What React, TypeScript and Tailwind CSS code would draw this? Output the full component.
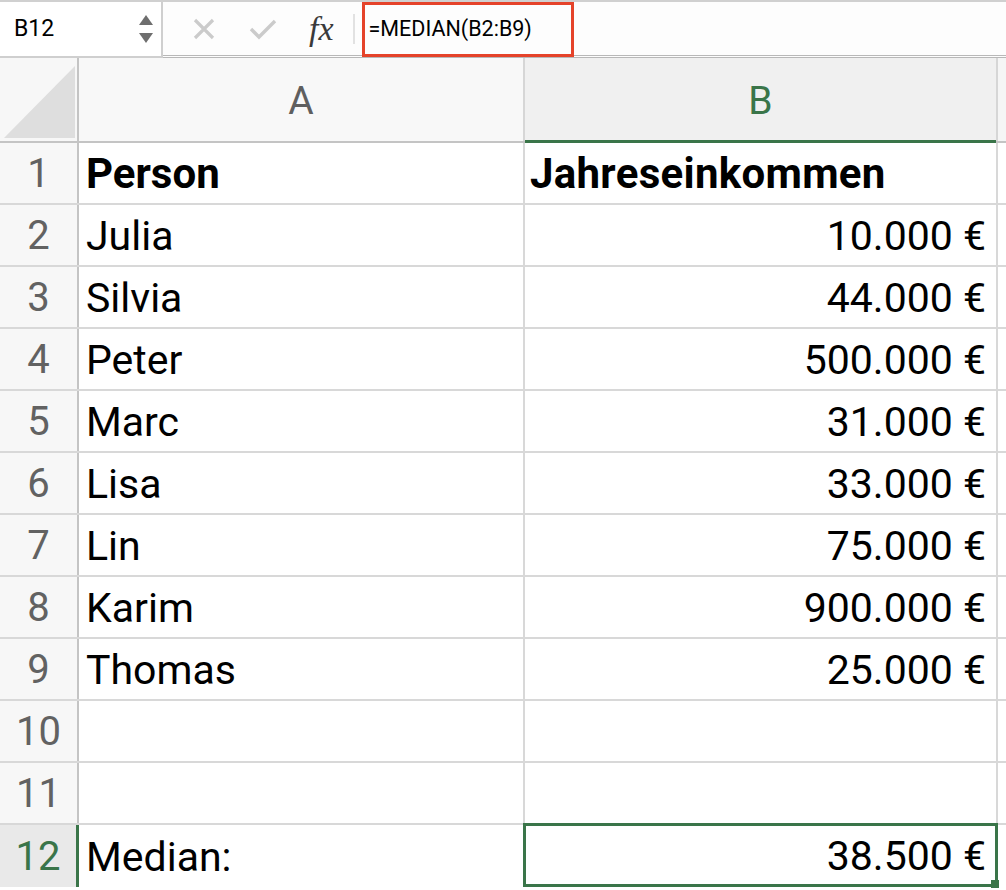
import React from 'react';

type Row = { n: number; a: string; b: string; bold?: boolean };

const rows: Row[] = [
  { n: 1, a: 'Person', b: 'Jahreseinkommen', bold: true },
  { n: 2, a: 'Julia', b: '10.000 €' },
  { n: 3, a: 'Silvia', b: '44.000 €' },
  { n: 4, a: 'Peter', b: '500.000 €' },
  { n: 5, a: 'Marc', b: '31.000 €' },
  { n: 6, a: 'Lisa', b: '33.000 €' },
  { n: 7, a: 'Lin', b: '75.000 €' },
  { n: 8, a: 'Karim', b: '900.000 €' },
  { n: 9, a: 'Thomas', b: '25.000 €' },
  { n: 10, a: '', b: '' },
  { n: 11, a: '', b: '' },
];

const FormulaBar: React.FC = () => (
  <div className="flex h-[58px] border-t-2 border-[#d0d0d0] bg-[#fdfdfd]">
    <div className="flex w-[163px] items-center justify-between border-r-2 border-b-2 border-[#cfcfcf] bg-white pl-[14px] pr-[8px]">
      <span className="text-[23px] text-black">B12</span>
      <div className="flex flex-col items-center gap-[8px]">
        <svg width="14" height="10" viewBox="0 0 14 10">
          <polygon points="7,0 14,10 0,10" fill="#6e6e6e" />
        </svg>
        <svg width="14" height="10" viewBox="0 0 14 10">
          <polygon points="0,0 14,0 7,10" fill="#6e6e6e" />
        </svg>
      </div>
    </div>
    <div className="flex flex-1 items-center border-b-[3px] border-double border-[#b8b8b8]">
      <div className="ml-[30px] flex items-center">
        <svg width="22" height="22" viewBox="0 0 22 22">
          <path d="M2 2 L20 20 M20 2 L2 20" stroke="#cbcbcb" strokeWidth="3.2" />
        </svg>
        <svg className="ml-[34px]" width="28" height="22" viewBox="0 0 28 22">
          <path d="M2 11 L10 19 L26 3" stroke="#cbcbcb" strokeWidth="3.4" fill="none" />
        </svg>
        <span className="ml-[32px] font-['Liberation_Serif',serif] text-[34px] italic leading-none text-[#3a3a3a]">fx</span>
        <div className="ml-[19px] h-[30px] w-[2px] bg-[#e2e2e2]" />
      </div>
      <div className="ml-[7px] flex h-[55px] w-[212px] items-center self-start border-[3px] border-[#e5432a] pl-[4px]">
        <span className="text-[21.5px] text-black">=MEDIAN(B2:B9)</span>
      </div>
    </div>
  </div>
);

const HeaderRow: React.FC = () => (
  <div className="flex h-[85px] border-b-2 border-[#c4c4c4]">
    <div className="flex w-[79px] shrink-0 items-end justify-start border-r-2 border-[#c4c4c4] bg-[#f7f7f7] pb-[3px] pl-[4px]">
      <svg width="71" height="72" viewBox="0 0 71 72">
        <polygon points="0,72 71,0 71,72" fill="#dedede" />
      </svg>
    </div>
    <div className="flex w-[446px] shrink-0 items-center justify-center border-r-2 border-[#d6d6d6] bg-[#f8f8f8] pt-[4px]">
      <span className="text-[39px] text-[#5f5f5f]">A</span>
    </div>
    <div className="-mb-[2px] flex w-[471px] shrink-0 items-center justify-center border-b-[3px] border-[#3a7549] bg-[#f0f0f0] pt-[4px]">
      <span className="text-[39px] text-[#3a7549]">B</span>
    </div>
    <div className="flex-1 border-l-2 border-[#d6d6d6] bg-[#f5f5f5]" />
  </div>
);

const GridRow: React.FC<{ row: Row }> = ({ row }) => (
  <div className="flex h-[62px] border-b-2 border-[#d8d8d8]">
    <div className="flex w-[79px] shrink-0 items-center justify-center border-r-2 border-[#c4c4c4] bg-[#f7f7f7] pt-[2px]">
      <span className="text-[40px] leading-none text-[#626262]">{row.n}</span>
    </div>
    <div className="flex w-[446px] shrink-0 items-center border-r-2 border-[#d8d8d8] pl-[7px] pt-[2px]">
      <span className={row.bold ? 'text-[42px] leading-none font-bold text-black' : 'text-[41px] leading-none text-black'}>{row.a}</span>
    </div>
    <div
      className={
        row.bold
          ? 'flex w-[471px] shrink-0 items-center pl-[5px] pt-[2px]'
          : 'flex w-[471px] shrink-0 items-center justify-end pr-[10px] pt-[2px]'
      }
    >
      <span className={row.bold ? 'text-[42px] leading-none font-bold tracking-[0.3px] text-black' : 'text-[41px] leading-none text-black'}>{row.b}</span>
    </div>
    <div className="flex-1 border-l-2 border-[#d8d8d8]" />
  </div>
);

const SelectedRow: React.FC = () => (
  <div className="flex h-[62px]">
    <div className="flex w-[79px] shrink-0 items-center justify-center border-r-[3px] border-[#3a7549] bg-[#e9e9e9] pt-[2px]">
      <span className="text-[40px] leading-none text-[#3a7549]">12</span>
    </div>
    <div className="flex w-[444px] shrink-0 items-center pl-[7px] pt-[2px]">
      <span className="text-[41px] leading-none text-black">Median:</span>
    </div>
    <div className="relative -mt-[2px] flex h-[64px] w-[475px] shrink-0 items-center justify-end border-[3px] border-[#3a7549] pr-[9px] pt-[2px]">
      <span className="text-[41px] leading-none text-black">38.500 €</span>
      <div className="absolute -right-[4px] -bottom-[4px] h-[8px] w-[8px] bg-[#3a7549]" />
    </div>
    <div className="flex-1" />
  </div>
);

export default function App() {
  return (
    <div className="h-[890px] w-[1006px] overflow-hidden bg-white font-['Roboto',sans-serif]">
      <FormulaBar />
      <HeaderRow />
      {rows.map((r) => (
        <GridRow key={r.n} row={r} />
      ))}
      <SelectedRow />
    </div>
  );
}
